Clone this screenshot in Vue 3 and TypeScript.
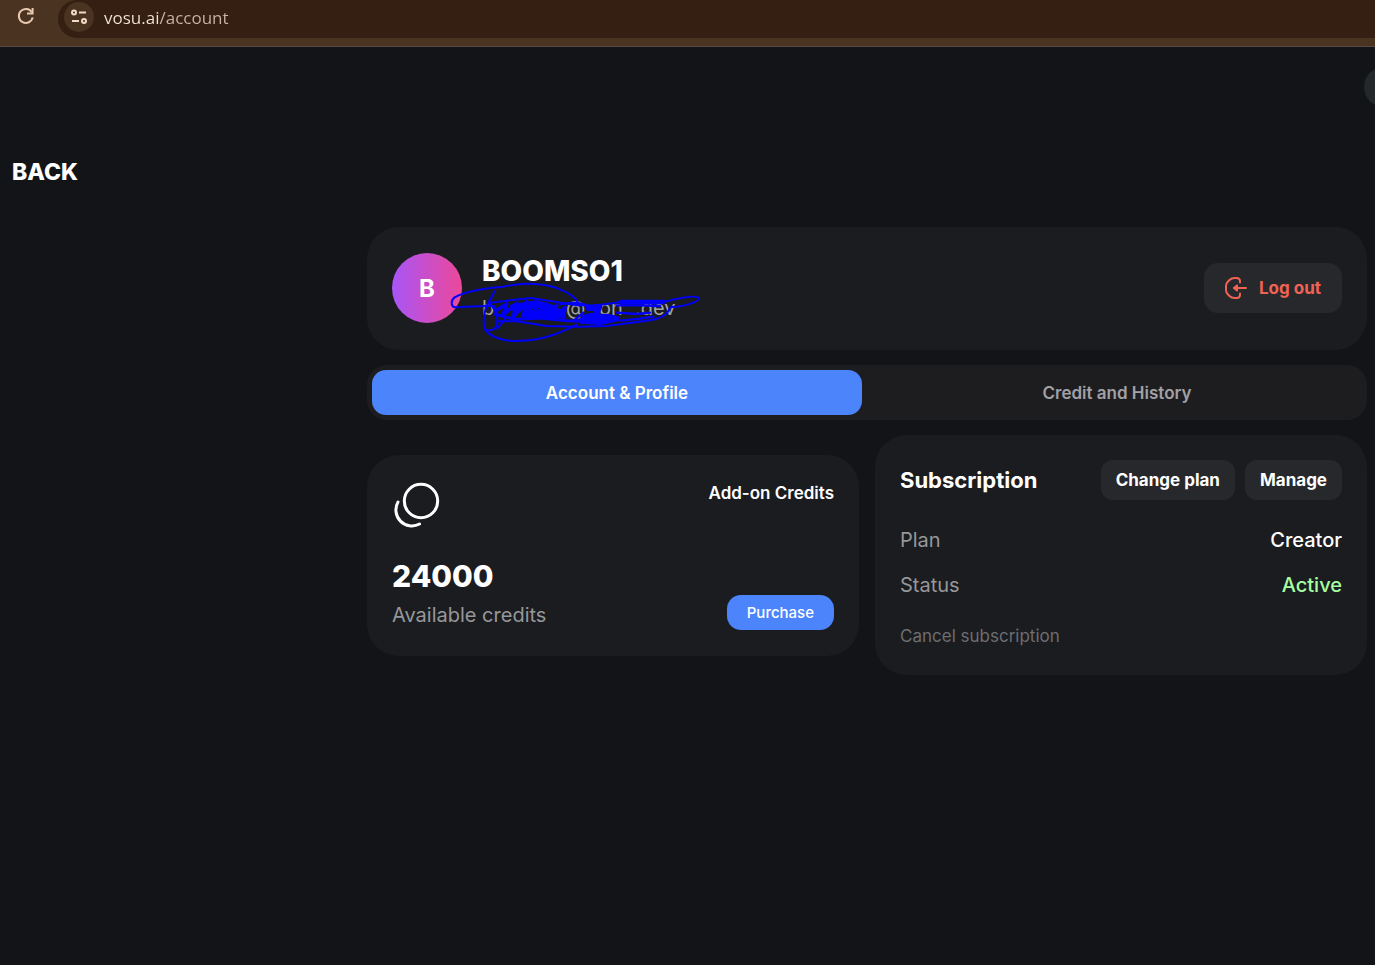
<script setup lang="ts">
import { ref } from 'vue'

type TabId = 'profile' | 'history'

const address = ref('vosu.ai/account')
const activeTab = ref<TabId>('profile')
const tabs: { id: TabId; label: string }[] = [
  { id: 'profile', label: 'Account & Profile' },
  { id: 'history', label: 'Credit and History' },
]
const emailParts = ['b', '@', 'on', '.dev']
const details = [
  { term: 'Plan', value: 'Creator', active: false },
  { term: 'Status', value: 'Active', active: true },
]
</script>

<template>
  <div class="page">
    <header class="browser">
      <button class="reload" type="button" aria-label="Reload">
        <svg width="18" height="18" viewBox="0 0 18 18" fill="none" stroke="currentColor" stroke-width="2">
          <path d="M14.8 5.2A7 7 0 1 0 15.7 10.4" />
          <path d="M15.6 1v5.6H10" />
        </svg>
      </button>
      <div class="omnibox">
        <button class="site" type="button" aria-label="Site information">
          <svg width="18" height="18" viewBox="0 0 18 18" fill="none" stroke="currentColor" stroke-width="2">
            <circle cx="4" cy="4.5" r="2" />
            <path d="M9 4.5h7M2 13h7" />
            <circle cx="14" cy="13" r="2" />
          </svg>
        </button>
        <input v-model="address" class="address" type="text" aria-label="Address" />
      </div>
    </header>

    <div class="menu-row"><button class="menu" type="button" aria-label="Menu"></button></div>
    <a class="back" href="#">BACK</a>

    <main class="content">
      <section class="card profile">
        <div class="avatar">B</div>
        <div class="identity">
          <h1>BOOMSO1</h1>
          <div class="email">
            <span v-for="part in emailParts" :key="part">{{ part }}</span>
            <svg class="scribble" width="252" height="62" viewBox="270 186 756 186" fill="none" stroke="#0000fb" stroke-width="6" stroke-linecap="round" stroke-linejoin="round">
              <path d="M402 258C350 256 310 262 284 262C272 260 272 240 284 232C320 212 376 204 430 200C490 186 560 190 600 208C634 222 654 238 658 258" />
              <path d="M404 214L378 262C370 290 366 326 386 340C420 366 480 366 530 358C580 348 620 330 650 314" />
              <path d="M376 330C400 334 412 326 412 300C412 280 400 260 384 248L410 270M412 326L436 296" />
              <path d="M390 248L440 242L512 234L590 246L640 254L700 258L780 246L920 244L944 238C980 230 1010 228 1017 234C1020 244 970 260 946 260L930 262C924 284 900 298 860 302L740 318L650 320L560 318L470 304L416 304" />
              <path d="M410 270L440 252L430 284L470 250L460 290L500 246L490 288L530 246L520 290L560 252L550 290L590 256L580 292L615 262L610 292" stroke-width="11" />
              <path d="M460 262L530 252L580 266L600 284L500 280" stroke-width="22" />
              <path d="M405 282L440 292L470 298L540 294L620 302L680 304" stroke-width="9" />
              <path d="M684 264L718 260L708 284L674 292L740 290L770 296L720 306L664 302" stroke-width="18" />
              <path d="M600 252L650 248L690 258M644 300L670 278" stroke-width="7" />
              <path d="M782 246L910 246" stroke-width="13" />
              <path d="M770 256L840 256L900 258M770 278L830 282L870 278M780 302L840 296L880 290" stroke-width="7" />
            </svg>
          </div>
        </div>
        <button class="logout" type="button">
          <svg width="22" height="22" viewBox="0 0 22 22" fill="none" stroke="currentColor" stroke-width="2" stroke-linecap="round" stroke-linejoin="round">
            <path d="M15 5.5V4.5Q15 1 11.5 1H9.500Q6.500 1 4.500 3L3 4.500Q1 6.500 1 9V13Q1 15.500 3 17.500L4.500 19Q6.500 21 9.500 21H11.500Q15 21 15 17.500V16.500" />
            <path d="M21 11H9" />
            <path d="M12 8.500L9 11L12 13.500Z" fill="currentColor" />
          </svg>
          <span>Log out</span>
        </button>
      </section>

      <div class="tabs" role="tablist">
        <button
          v-for="tab in tabs"
          :key="tab.id"
          class="tab"
          :class="{ selected: activeTab === tab.id }"
          type="button"
          role="tab"
          :aria-selected="activeTab === tab.id"
          @click="activeTab = tab.id"
        >{{ tab.label }}</button>
      </div>

      <div class="columns">
        <section class="card credits">
          <div class="credits-top">
            <svg width="48" height="48" viewBox="0 0 48 48" fill="none" stroke="#fff" stroke-width="3" stroke-linecap="round">
              <circle cx="29" cy="19" r="16.700" />
              <path d="M6 20A16 16 0 0 0 27.500 42" />
            </svg>
            <span class="addon">Add-on Credits</span>
          </div>
          <div class="credits-bottom">
            <div>
              <strong class="amount">24000</strong>
              <span class="caption">Available credits</span>
            </div>
            <button class="purchase" type="button">Purchase</button>
          </div>
        </section>

        <section class="card subscription">
          <div class="sub-head">
            <h2>Subscription</h2>
            <button class="small" type="button">Change plan</button>
            <button class="small" type="button">Manage</button>
          </div>
          <dl>
            <div v-for="row in details" :key="row.term" class="row">
              <dt>{{ row.term }}</dt>
              <dd :class="{ active: row.active }">{{ row.value }}</dd>
            </div>
          </dl>
          <button class="cancel" type="button">Cancel subscription</button>
        </section>
      </div>
    </main>
  </div>
</template>

<style>
body {
  background: #131418;
}
</style>

<style scoped>
.page {
  min-height: 100vh;
  overflow: hidden;
  background: #131418;
  color: #fff;
  font-family: Inter, "Liberation Sans", sans-serif;
}
.page, .page * {
  box-sizing: border-box;
}
button {
  padding: 0;
  border: 0;
  background: none;
  color: inherit;
  font: inherit;
  cursor: pointer;
}
h1, h2, dl, dd {
  margin: 0;
}
svg {
  display: block;
  flex: none;
}
.browser {
  display: flex;
  align-items: flex-start;
  height: 47px;
  border-bottom: 1px solid #554b43;
  background: #4b3321;
}
.reload {
  flex: none;
  width: 58px;
  padding: 7px 0 0 17px;
  color: #e8c9b0;
}
.omnibox {
  display: flex;
  flex: 1;
  align-items: center;
  height: 38px;
  padding-left: 6px;
  border-radius: 20px 0 0 20px;
  background: #341f12;
}
.site {
  display: grid;
  flex: none;
  place-items: center;
  width: 30px;
  height: 30px;
  margin-bottom: 4px;
  border-radius: 50%;
  background: #4b3321;
  color: #f2dac8;
}
.address {
  flex: 1;
  min-width: 0;
  height: 30px;
  padding: 0;
  margin: 0 0 4px 10px;
  border: 0;
  outline: 0;
  background: linear-gradient(90deg, #f8e5d8 55px, #cbb5a5 55px);
  background-clip: text;
  color: transparent;
  font: 17px "Open Sans", "Noto Sans", sans-serif;
}
.menu-row {
  display: flex;
  justify-content: flex-end;
  padding-top: 20px;
}
.menu {
  width: 40px;
  height: 40px;
  margin-right: -29px;
  border-radius: 50%;
  background: #25282a;
}
.back {
  display: block;
  width: max-content;
  margin: 50px 0 0 12px;
  color: #fff;
  font-size: 23px;
  font-weight: 800;
  line-height: 30px;
  text-decoration: none;
}
.content {
  display: flex;
  flex-direction: column;
  gap: 15px;
  margin: 40px 8px 40px 367px;
}
.card {
  border-radius: 32px;
  background: #1b1c1f;
}
.profile {
  display: flex;
  align-items: center;
  padding: 24px 25px 25px;
}
.avatar {
  display: grid;
  flex: none;
  place-items: center;
  width: 70px;
  height: 70px;
  border-radius: 50%;
  background: linear-gradient(90deg, #a855f7, #ec4899);
  font-size: 24px;
  font-weight: 700;
}
.identity {
  flex: 1;
  margin-left: 20px;
}
h1 {
  font-size: 28px;
  font-weight: 800;
  line-height: 40px;
}
.email {
  position: relative;
  display: grid;
  grid-template-columns: 84px 33px 36px auto;
  justify-content: start;
  color: #a3a3a3;
  font-size: 20px;
  line-height: 34px;
}
.scribble {
  position: absolute;
  top: -9px;
  left: -32px;
}
.logout {
  display: flex;
  gap: 12px;
  align-items: center;
  height: 50px;
  padding: 0 21px;
  border-radius: 14px;
  background: #27282b;
  color: #ef6354;
  font-size: 17px;
  font-weight: 700;
}
.tabs {
  display: flex;
  gap: 10px;
  padding: 5px;
  border-radius: 20px;
  background: #1d1d20;
}
.tab {
  flex: 1;
  height: 45px;
  border-radius: 14px;
  color: #a1a1a5;
  font-size: 17px;
  font-weight: 600;
}
.tab.selected {
  background: #4c84fc;
  color: #fff;
}
.columns {
  display: grid;
  grid-template-columns: 1fr 1fr;
  gap: 16px;
  align-items: start;
}
.credits {
  margin-top: 20px;
  padding: 27px 25px 23px;
}
.credits-top, .credits-bottom, .sub-head, .row {
  display: flex;
  justify-content: space-between;
}
.addon {
  font-size: 17px;
  font-weight: 600;
  line-height: 22px;
}
.credits-bottom {
  align-items: flex-end;
  margin-top: 27px;
}
.amount {
  display: block;
  font-size: 30px;
  font-weight: 800;
  line-height: 38px;
}
.caption {
  display: block;
  margin-top: 2px;
  color: #96979a;
  font-size: 20px;
  line-height: 36px;
}
.purchase {
  height: 35px;
  margin-bottom: 3px;
  padding: 0 20px;
  border-radius: 14px;
  background: #4c84fc;
  font-size: 15px;
  font-weight: 500;
}
.subscription {
  padding: 25px 25px 24px;
}
.sub-head {
  gap: 10px;
  align-items: center;
}
h2 {
  flex: 1;
  font-size: 22px;
  font-weight: 700;
  line-height: 40px;
}
.small {
  height: 40px;
  padding: 0 15px;
  border-radius: 12px;
  background: #27282b;
  font-size: 17px;
  font-weight: 700;
}
dl {
  margin-top: 17px;
}
.row {
  align-items: center;
  height: 45px;
  font-size: 20px;
}
dt {
  color: #96979a;
}
dd {
  font-weight: 500;
}
.active {
  color: #a5ffa0;
}
.cancel {
  display: block;
  margin-top: 14px;
  color: #6d6e71;
  font-size: 17px;
  line-height: 30px;
}
</style>
